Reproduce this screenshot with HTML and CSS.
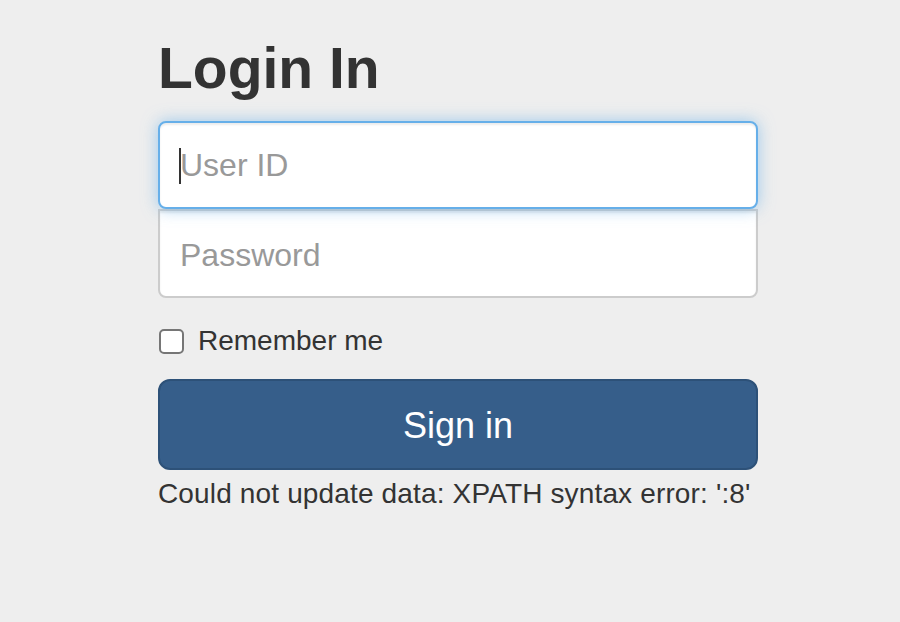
FILE: index.html
```html
<!DOCTYPE html>
<html>
<head>
<meta charset="utf-8">
<link rel="stylesheet" href="styles.css">
</head>
<body>
<form class="signin">
  <h2 class="heading">Login In</h2>
  <div class="field">
    <input class="input input-top is-focus" type="text" placeholder="User ID">
    <span class="caret"></span>
  </div>
  <input class="input input-bottom" type="password" placeholder="Password">
  <label class="remember"><span class="box"></span>Remember me</label>
  <button class="btn" type="button">Sign in</button>
  <div class="error">Could not update data: XPATH syntax error: ':8'</div>
</form>
</body>
</html>
```
FILE: styles.css
```css
html, body {
  margin: 0;
  padding: 0;
  background: #eeeeee;
}
body {
  font-family: "Liberation Sans", Arial, Helvetica, sans-serif;
  color: #333333;
  font-size: 28px;
}
.signin {
  width: 600px;
  margin-left: 158px;
  padding-top: 35px;
  display: flex;
  flex-direction: column;
}
.heading {
  margin: 0 0 20px 0;
  font-size: 57px;
  line-height: 66px;
  font-weight: bold;
  color: #333333;
}
.field {
  position: relative;
}
.input {
  box-sizing: border-box;
  display: block;
  width: 600px;
  height: 88px;
  margin: 0;
  padding: 0 20px;
  font-family: "Liberation Sans", Arial, Helvetica, sans-serif;
  font-size: 32px;
  color: #555;
  background: #fff;
  border: 2px solid #cccccc;
  border-radius: 8px;
  outline: none;
  box-shadow: inset 0 2px 2px rgba(0,0,0,0.075);
}
.input::placeholder {
  color: #999999;
}
.input-top {
  position: relative;
  z-index: 2;
}
.input-bottom {
  height: 89px;
  padding-top: 3px;
  border-top-left-radius: 0;
  border-top-right-radius: 0;
}
.is-focus {
  border-color: #66afe9;
  box-shadow: inset 0 2px 2px rgba(0,0,0,0.075), 0 0 16px rgba(102,175,233,0.6);
}
.caret {
  position: absolute;
  left: 21px;
  top: 27px;
  width: 2px;
  height: 36px;
  background: #333;
  z-index: 3;
}
.remember {
  display: flex;
  align-items: center;
  margin-top: 30px;
  height: 26px;
  font-size: 28px;
  line-height: 26px;
  color: #333;
}
.box {
  box-sizing: border-box;
  width: 25px;
  height: 25px;
  margin: 0 14px 0 1px;
  border: 2px solid #767676;
  border-radius: 5px;
  background: #fff;
}
.btn {
  box-sizing: border-box;
  margin-top: 25px;
  width: 600px;
  height: 91px;
  background: #365e8a;
  border: 2px solid #2d5178;
  border-radius: 12px;
  color: #ffffff;
  font-family: "Liberation Sans", Arial, Helvetica, sans-serif;
  font-size: 36px;
  padding: 3px 0 0 0;
}
.error {
  margin-top: 4px;
  font-size: 28px;
  letter-spacing: 0.15px;
  line-height: 40px;
  color: #333;
}
```
